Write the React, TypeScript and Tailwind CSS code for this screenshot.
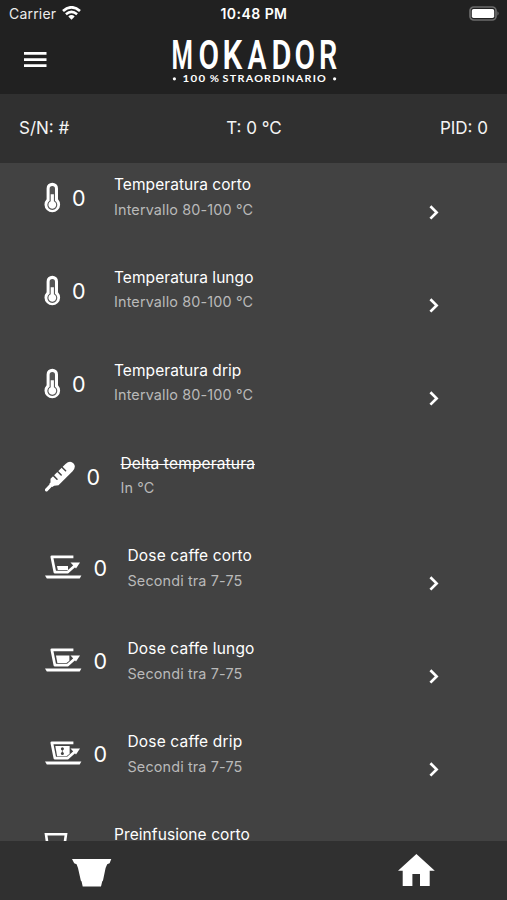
import React from "react";

type IconKind = "thermo" | "probe" | "cupLow" | "cupHigh" | "cupDrip" | "glass";

type Setting = {
  title: string;
  hint: string;
  icon: IconKind;
  value?: string;
  tracking?: string;
  disabled?: boolean;
};

const TEMP_HINT = "Intervallo 80-100 °C";
const DOSE_HINT = "Secondi tra 7-75";

const settings: Setting[] = [
  { title: "Temperatura corto", hint: TEMP_HINT, icon: "thermo", value: "0", tracking: "tracking-[0.06px]" },
  { title: "Temperatura lungo", hint: TEMP_HINT, icon: "thermo", value: "0", tracking: "tracking-[0.06px]" },
  { title: "Temperatura drip", hint: TEMP_HINT, icon: "thermo", value: "0", tracking: "tracking-[0.06px]" },
  { title: "Delta temperatura", hint: "In °C", icon: "probe", value: "0", disabled: true },
  { title: "Dose caffe corto", hint: DOSE_HINT, icon: "cupLow", value: "0" },
  { title: "Dose caffe lungo", hint: DOSE_HINT, icon: "cupHigh", value: "0" },
  { title: "Dose caffe drip", hint: DOSE_HINT, icon: "cupDrip", value: "0" },
  { title: "Preinfusione corto", hint: "", icon: "glass", tracking: "tracking-[0.08px]" },
];

// Widths of the icon and value columns; wider artwork pushes the texts right.
const columns: Record<IconKind, { icon: string; value: string }> = {
  thermo: { icon: "w-[28px]", value: "w-[42px] mt-[10px]" },
  probe: { icon: "w-[42.5px]", value: "w-[34px] mt-[10px]" },
  cupLow: { icon: "w-[49.5px]", value: "w-[34px] mt-[8.5px]" },
  cupHigh: { icon: "w-[49.5px]", value: "w-[34px] mt-[8.5px]" },
  cupDrip: { icon: "w-[49.5px]", value: "w-[34px] mt-[8.5px]" },
  glass: { icon: "w-[28px]", value: "w-[42px] mt-[10px]" },
};

function Cup({ children }: { children: React.ReactNode }) {
  return (
    <svg className="mt-[12px] ml-px shrink-0" width="37" height="24" viewBox="0 0 37 24" fill="none">
      <path d="M28.4 1.8H6.8L9.9 17.2H22.5L30.6 10" stroke="white" strokeWidth="2.7" strokeLinejoin="round" />
      <path d="M25.5 7.6H35L31 13.6Z" fill="white" />
      {children}
      <path d="M0 20.4H36.4L34.7 23.4H1.8Z" fill="white" />
    </svg>
  );
}

function SettingIcon({ kind }: { kind: IconKind }) {
  switch (kind) {
    case "thermo":
      return (
        <svg className="mt-[10px] shrink-0" width="17" height="31" viewBox="0 0 17 31">
          <path d="M2.6 6.4a5.7 5.7 0 0 1 11.4 0v10.8a7.8 7.8 0 1 1-11.4 0Z" fill="white" />
          <path d="M5.6 6.8a2.7 2.7 0 0 1 5.4 0v12a5 5 0 1 1-5.4 0Z" fill="#555" />
          <path d="M6.7 12.2h3.2v7a3.9 3.9 0 1 1-3.2 0Z" fill="white" />
        </svg>
      );
    case "probe":
      return (
        <svg className="mt-[10px] ml-px shrink-0" width="31" height="31" viewBox="0 0 31 31">
          <path d="M1.5 28.8L7 23.2" stroke="white" strokeWidth="3.2" strokeLinecap="round" />
          <path
            d="M5.5 21.5V17.8L20.5 3Q25-1 28.6 2.4Q31.5 6 27.6 10.2L13.5 24.3L9.2 24.8L7.2 26L4.2 23Z"
            fill="white"
          />
          <path d="M8.2 14.4L12 18.2M12.4 10.2L16.2 14M16.8 6L20.6 9.8" stroke="#424242" strokeWidth="1.5" strokeLinecap="round" />
        </svg>
      );
    case "cupLow":
      return (
        <Cup>
          <path d="M12 11H23V15H12.8Z" fill="white" />
        </Cup>
      );
    case "cupHigh":
      return (
        <Cup>
          <path d="M11 7.6H24.4V12.8L21.5 15H12.4Z" fill="white" />
        </Cup>
      );
    case "cupDrip":
      return (
        <Cup>
          <path d="M10.3 4.9H24.6V12.8L21.5 15.2H12.1Z" fill="white" />
          <g fill="#424242">
            <circle cx="17.4" cy="7.8" r="1.5" />
            <circle cx="17.4" cy="12.6" r="1.5" />
          </g>
          <path d="M17.4 8V13" stroke="#424242" strokeWidth=".7" />
        </Cup>
      );
    case "glass":
      return (
        <svg className="mt-[10px] shrink-0" width="25" height="30" viewBox="0 0 25 30" fill="none">
          <path d="M2 2.2H22L18.5 27H5.5Z" stroke="white" strokeWidth="2.6" />
        </svg>
      );
  }
}

function SettingRow({ item }: { item: Setting }) {
  const column = columns[item.icon];
  return (
    <div className="flex h-[92.86px] shrink-0 items-start pt-[9px] pr-[68px] pl-[44px]">
      <div className={`flex shrink-0 ${column.icon}`}>
        <SettingIcon kind={item.icon} />
      </div>
      <span className={`shrink-0 text-[21.5px] leading-[32px] ${column.value}`}>{item.value}</span>
      <div className="whitespace-nowrap">
        <div className={`text-[15.5px] leading-[25px] ${item.tracking ?? "tracking-[0.16px]"}`}>
          <span className={item.disabled ? "line-through decoration-1" : ""}>{item.title}</span>
        </div>
        <div className="pt-[0.6px] text-[14.4px] leading-[24px] tracking-[0.14px] text-[#b9b9b9]">{item.hint}</div>
      </div>
      {!item.disabled && (
        <svg className="mt-[32px] ml-auto shrink-0" width="10" height="17" viewBox="0 0 10 17" fill="none">
          <path d="M1.4 2.2L7.6 8.4L1.4 14.6" stroke="white" strokeWidth="2.7" />
        </svg>
      )}
    </div>
  );
}

function StatusBar() {
  return (
    <div className="grid h-[27px] grid-cols-3 items-center px-[9px] text-[14px]">
      <div className="flex items-center gap-[6px] text-[#ececec]">
        <span className="tracking-[0.2px]">Carrier</span>
        <svg className="-mt-px" width="19" height="14" viewBox="0 0 19 14" fill="none">
          <path d="M1 5Q9.5-2.4 18 5" stroke="white" strokeWidth="2.7" />
          <path d="M3.9 8.3Q9.5 3.5 15.1 8.3" stroke="white" strokeWidth="2.5" />
          <path d="M6.3 10.4Q9.5 7.8 12.7 10.4L9.5 13.7Z" fill="white" />
        </svg>
      </div>
      <span className="pl-px text-center font-semibold tracking-[0.45px] whitespace-nowrap">10:48 PM</span>
      <svg className="-mt-px -mr-[2px] justify-self-end" width="31" height="15" viewBox="0 0 31 15">
        <rect x="1" y="1" width="26" height="13" rx="3.8" fill="none" stroke="#6b6b6b" strokeWidth="1.7" />
        <rect x="2.8" y="3" width="22.4" height="9" rx="1.8" fill="white" />
        <path d="M28.4 5.3q2.6 2.2 0 4.4Z" fill="#6b6b6b" />
      </svg>
    </div>
  );
}

// Letter, left edge and advance width of each glyph in the wordmark.
const wordmark: [string, number, number][] = [
  ["M", 1.6, 21.4],
  ["O", 28.6, 20.6],
  ["K", 52.6, 19.8],
  ["A", 77.5, 19],
  ["D", 101.5, 20],
  ["O", 124.6, 20.6],
  ["R", 149, 18.2],
];

function Logo() {
  return (
    <svg className="overflow-visible" width="168" height="54" viewBox="0 0 168 54" fill="white">
      <g fontFamily="Roboto, sans-serif" fontWeight="600" fontSize="40.8">
        {wordmark.map(([letter, x, width]) => (
          <text key={x} x={x} y="35.3" textLength={width} lengthAdjust="spacingAndGlyphs">
            {letter}
          </text>
        ))}
      </g>
      <circle cx="4.4" cy="44.8" r="1.6" />
      <circle cx="164.6" cy="44.8" r="1.6" />
      <g fontFamily="Lato, sans-serif" fontWeight="700" fontSize="8.8" letterSpacing="1">
        <text x="12.4" y="47.9" textLength="24" lengthAdjust="spacingAndGlyphs">100</text>
        <text x="39.8" y="47.9" textLength="10.5" lengthAdjust="spacingAndGlyphs">%</text>
        <text x="52.6" y="47.9" textLength="104.5" lengthAdjust="spacingAndGlyphs">STRAORDINARIO</text>
      </g>
    </svg>
  );
}

export default function App() {
  return (
    <div className="flex h-[900px] w-[507px] flex-col overflow-hidden bg-[#303030] font-['Inter','Liberation_Sans',sans-serif] text-white">
      <div className="h-[94px] shrink-0 bg-[#212121]">
        <StatusBar />
        <div className="flex items-start">
          <svg className="mt-[24px] ml-[24px]" width="23" height="17" viewBox="0 0 23 17" fill="white">
            <path d="M0 1H22.5V3.8H0ZM0 7.2H22.5V10H0ZM0 13.2H22.5V16H0Z" />
          </svg>
          <div className="mt-[7px] ml-[123px]">
            <Logo />
          </div>
        </div>
      </div>

      <div className="grid h-[69px] shrink-0 grid-cols-3 items-center px-[19px] text-[17px] text-[#f4f4f4]">
        <span>S/N: #</span>
        <span className="pl-px text-center">T: 0 °C</span>
        <span className="text-right">PID: 0</span>
      </div>

      <div className="h-[678px] shrink-0 overflow-hidden bg-[#424242]">
        {settings.map((item) => (
          <SettingRow key={item.title} item={item} />
        ))}
      </div>

      <div className="flex h-[59px] shrink-0 items-start justify-between px-[72px]">
        <svg className="mt-[17.5px]" width="40" height="28" viewBox="0 0 40 28" fill="white">
          <path d="M0 0H39.3L37.6 4.2L35.2 5.2L33.6 9L31 21.5L30.2 22.5L29 27.5H10.7L9.6 22.5L8.8 21.5L6 9L4.6 5.2L2.2 4.2Z" />
        </svg>
        <svg className="mt-[13px]" width="37" height="32" viewBox="0 0 37 32" fill="white">
          <path d="M18.4 0L36.8 16.7H31.7V32H22V20H14.4V32H4.7V16.7H0Z" />
        </svg>
      </div>
    </div>
  );
}
